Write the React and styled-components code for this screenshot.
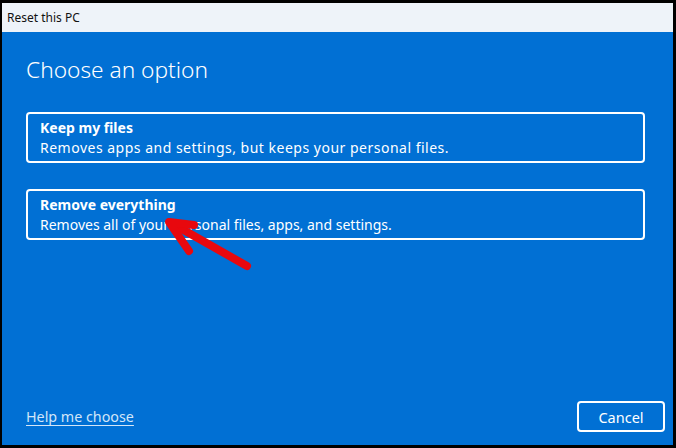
import styled, { createGlobalStyle } from 'styled-components';

const GlobalStyle = createGlobalStyle`
  html, body {
    margin: 0;
    padding: 0;
    background: #000;
  }
  * {
    box-sizing: border-box;
  }
`;

function App() {
  return (
    <>
      <GlobalStyle />
      <Frame>
        <Window>
          <TitleBar>Reset this PC</TitleBar>
          <Content>
            <Main>
              <Heading>Choose an option</Heading>
              <Options>
                <Option>
                  <OptionTitle>Keep my files</OptionTitle>
                  <OptionText $spacing="0.5px">Removes apps and settings, but keeps your personal files.</OptionText>
                </Option>
                <Option>
                  <OptionTitle>Remove everything</OptionTitle>
                  <OptionText>Removes all of your personal files, apps, and settings.</OptionText>
                </Option>
              </Options>
            </Main>
            <Footer>
              <HelpLink href="#">Help me choose</HelpLink>
              <CancelButton>Cancel</CancelButton>
            </Footer>
          </Content>
        </Window>
        <Arrow viewBox="0 0 676 448" width="676" height="448">
          <g stroke="#e8080e" strokeWidth="8" strokeLinecap="round" strokeLinejoin="round" fill="none">
            <line x1="247" y1="266" x2="173" y2="224" />
            <polyline points="194,225 169,222 189,251" />
          </g>
        </Arrow>
      </Frame>
    </>
  );
}

export default App;

const Frame = styled.div`
  position: relative;
  width: 676px;
  height: 448px;
  background: #000;
  padding: 3px 3px 3px 2px;
  font-family: "Noto Sans", "Open Sans", sans-serif;
`;

const Window = styled.div`
  width: 100%;
  height: 100%;
  display: flex;
  flex-direction: column;
`;

const TitleBar = styled.div`
  height: 29px;
  flex: none;
  background: #eef3f9;
  color: #111;
  font-size: 12px;
  display: flex;
  align-items: center;
  padding-left: 5px;
`;

const Content = styled.div`
  flex: 1;
  background: #0170d4;
  display: flex;
  flex-direction: column;
  justify-content: space-between;
  color: #fff;
`;

const Main = styled.div`
  padding: 23px 28px 0 24px;
`;

const Heading = styled.h1`
  margin: 0;
  font-size: 22.7px;
  font-weight: 300;
  line-height: 30px;
`;

const Options = styled.div`
  margin-top: 27px;
  display: flex;
  flex-direction: column;
  gap: 26px;
`;

const Option = styled.div`
  height: 51px;
  border: 2px solid #fff;
  border-radius: 4px;
  padding: 4px 12px 2px;
  display: flex;
  flex-direction: column;
`;

const OptionTitle = styled.div`
  font-size: 14px;
  font-weight: 700;
  line-height: 20px;
`;

const OptionText = styled.div`
  font-size: 14px;
  line-height: 20px;
  letter-spacing: ${(p) => p.$spacing || 'normal'};
`;

const Footer = styled.div`
  display: flex;
  justify-content: space-between;
  align-items: center;
  padding: 0 8px 13px 24px;
`;

const HelpLink = styled.a`
  color: #d3e6f8;
  font-size: 14.3px;
  text-decoration: underline;
  text-underline-offset: 3px;
`;

const CancelButton = styled.button`
  width: 88px;
  height: 31px;
  border: 2px solid #fff;
  border-radius: 4px;
  background: transparent;
  color: #fff;
  font-family: "Noto Sans", "Open Sans", sans-serif;
  font-size: 14.5px;
  padding: 0;
`;

const Arrow = styled.svg`
  position: absolute;
  left: 0;
  top: 0;
  pointer-events: none;
`;
